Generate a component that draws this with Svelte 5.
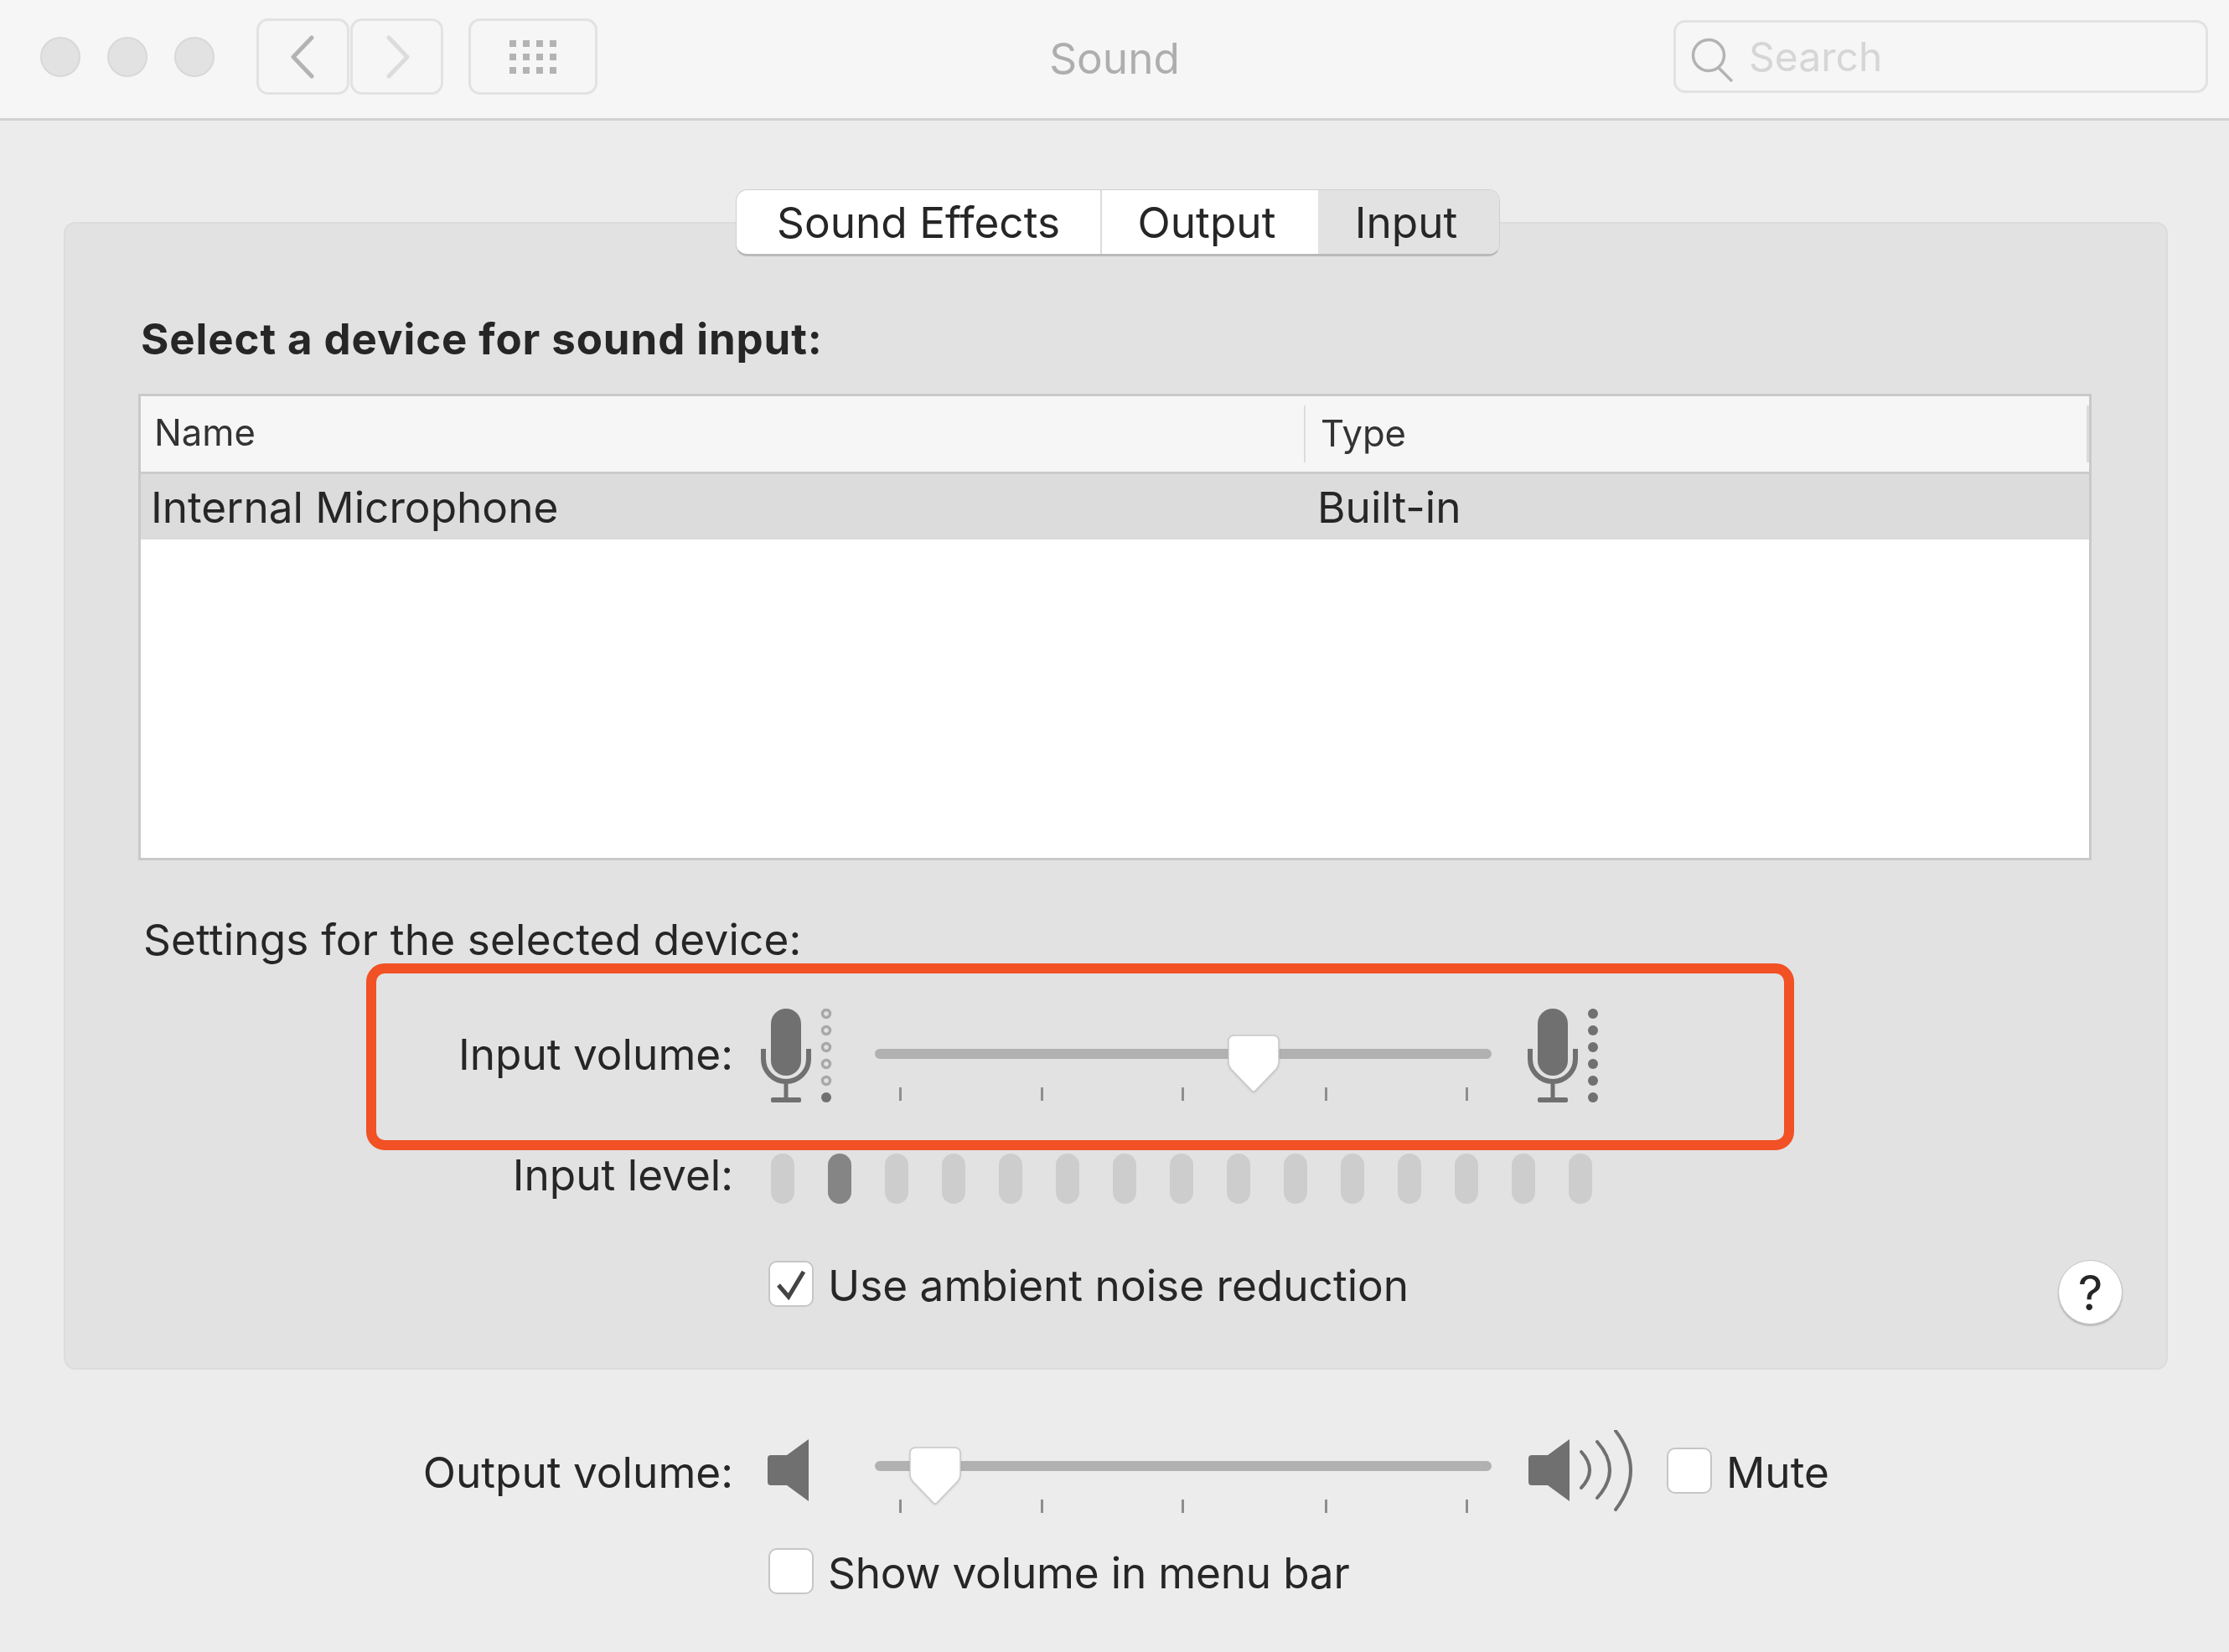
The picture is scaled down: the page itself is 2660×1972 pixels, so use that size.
<script>
  const ticks = [29, 198, 366, 537, 705];
  const levels = Array.from({ length: 15 }, (_, i) => i === 1);
  const dotRows = [6, 26, 46, 66, 86, 106];
  const gridDots = [];
  for (const y of [0, 16, 32]) {
    for (const x of [0, 16, 32, 48]) gridDots.push({ x, y });
  }
</script>

{#snippet mic(loud)}
  <svg class="icon" width="88" height="112" viewBox="0 0 88 112">
    <rect x="12" y="0" width="36" height="80" rx="18" fill="#707070" />
    <path d="M3 48V60A27 27 0 0 0 57 60V48" fill="none" stroke="#707070" stroke-width="6" />
    <path d="M30 87V108" stroke="#707070" stroke-width="5" />
    <rect x="12" y="106" width="36" height="6" rx="2" fill="#707070" />
    {#each dotRows as y, i}
      {#if loud || i === 5}
        <circle cx="78" cy={y} r="6" fill="#707070" />
      {:else}
        <circle cx="78" cy={y} r="4.5" fill="none" stroke="#a8a8a8" stroke-width="3.5" />
      {/if}
    {/each}
  </svg>
{/snippet}

{#snippet slider(knobLeft)}
  <div class="slider">
    <div class="track"></div>
    {#each ticks as t}
      <span class="tick" style="left: {t}px"></span>
    {/each}
    <svg class="knob" style="left: {knobLeft}px" width="62" height="70" viewBox="0 0 62 70">
      <path
        d="M8 1H54Q61 1 61 8V33Q61 37 58 41L33 67Q31 69 29 67L4 41Q1 37 1 33V8Q1 1 8 1Z"
        fill="#fff"
        stroke="#c9c9c9"
        stroke-width="1.5"
      />
    </svg>
  </div>
{/snippet}

{#snippet checkbox(checked)}
  <span class="check">
    {#if checked}
      <svg width="54" height="55" viewBox="0 0 54 55">
        <path d="M12 29L24 43L42 13" fill="none" stroke="#444" stroke-width="5" />
      </svg>
    {/if}
  </span>
{/snippet}

<div class="window">
  <header class="toolbar">
    <div class="left">
      <div class="lights">
        <span></span>
        <span></span>
        <span></span>
      </div>
      <div class="nav">
        <button class="btn">
          <svg width="30" height="54" viewBox="0 0 30 54">
            <path d="M26 4L4 27L26 50" transform="translate(-1 0)" fill="none" stroke="#b3b3b3" stroke-width="5" stroke-linecap="round" stroke-linejoin="round" />
          </svg>
        </button>
        <button class="btn">
          <svg width="30" height="54" viewBox="0 0 30 54">
            <path d="M4 4L26 27L4 50" transform="translate(1 0)" fill="none" stroke="#dcdcdc" stroke-width="5" stroke-linecap="round" stroke-linejoin="round" />
          </svg>
        </button>
      </div>
      <button class="btn grid">
        <svg width="56" height="40" viewBox="0 0 56 40">
          {#each gridDots as d}
            <rect x={d.x} y={d.y} width="8" height="8" fill="#b3b3b3" />
          {/each}
        </svg>
      </button>
    </div>
    <div class="title">Sound</div>
    <div class="search">
      <svg width="56" height="56" viewBox="0 0 56 56">
        <circle cx="21" cy="21" r="18.5" fill="none" stroke="#b3b3b3" stroke-width="3.5" />
        <path d="M33 36L49 52" stroke="#b3b3b3" stroke-width="3.5" />
      </svg>
      <span>Search</span>
    </div>
  </header>

  <main class="content">
    <section class="panel">
      <div class="tabs">
        <div class="tab effects">Sound Effects</div>
        <div class="tab output">Output</div>
        <div class="tab input">Input</div>
      </div>

      <h2>Select a device for sound input:</h2>

      <div class="table">
        <div class="thead">
          <div class="th name">Name</div>
          <div class="th type">Type</div>
          <span class="th-end"></span>
        </div>
        <div class="selected">
          <div class="cell name">Internal Microphone</div>
          <div class="cell">Built-in</div>
        </div>
      </div>

      <p class="settings">Settings for the selected device:</p>

      <div class="row volume">
        <div class="label">Input volume:</div>
        <div class="icon-col">{@render mic(false)}</div>
        {@render slider(421)}
        <div class="mic-right">{@render mic(true)}</div>
      </div>

      <div class="row level">
        <div class="label">Input level:</div>
        <div class="bars">
          {#each levels as on}
            <span class="bar" class:on></span>
          {/each}
        </div>
      </div>

      <div class="row noise">
        <label class="option">
          {@render checkbox(true)}
          <span>Use ambient noise reduction</span>
        </label>
        <button class="help">?</button>
      </div>
    </section>

    <div class="row out">
      <div class="label">Output volume:</div>
      <div class="icon-col">
        <svg class="icon" width="62" height="100" viewBox="0 0 62 100">
          <path d="M12 30H31L57 11V85L31 66H12Q8 66 8 62V34Q8 30 12 30Z" fill="#707070" />
        </svg>
      </div>
      {@render slider(41)}
      <svg class="loud" width="150" height="100" viewBox="0 0 150 100">
        <path d="M5 30H24L50 11V85L24 66H5Q1 66 1 62V34Q1 30 5 30Z" fill="#707070" />
        <g fill="none" stroke="#707070" stroke-width="4" stroke-linecap="round">
          <path d="M64 26Q84 48 64 69" />
          <path d="M83 14Q113 48 83 81" />
          <path d="M105 1Q141 48 105 95" />
        </g>
      </svg>
      <label class="option mute">
        {@render checkbox(false)}
        <span>Mute</span>
      </label>
    </div>

    <label class="option menubar">
      {@render checkbox(false)}
      <span>Show volume in menu bar</span>
    </label>
  </main>

  <!-- annotation drawn over the screenshot -->
  <div class="callout"></div>
</div>

<style>
  :global(body) {
    margin: 0;
  }

  .window {
    position: relative;
    width: 2660px;
    height: 1972px;
    overflow: hidden;
    background: #ececec;
    color: #262626;
    font-family: Inter, "Liberation Sans", sans-serif;
    font-size: 51.3px;
    line-height: 60px;
    filter: blur(0.5px);
  }

  .toolbar {
    display: grid;
    grid-template-columns: 1fr auto 1fr;
    align-items: center;
    box-sizing: border-box;
    height: 144px;
    padding: 0 25px 6px;
    background: #f6f6f6;
    border-bottom: 3px solid #d2d2d2;
  }

  .left {
    display: flex;
    align-items: center;
    padding-left: 23px;
  }

  .lights {
    display: flex;
    gap: 32px;
    margin-right: 50px;
  }

  .lights span {
    box-sizing: border-box;
    width: 48px;
    height: 48px;
    border-radius: 50%;
    background: #e2e2e2;
    border: 2px solid #d8d8d8;
  }

  .nav {
    display: flex;
    gap: 1px;
    margin-right: 30px;
  }

  .btn {
    display: flex;
    align-items: center;
    justify-content: center;
    box-sizing: border-box;
    width: 111px;
    height: 91px;
    padding: 0;
    background: none;
    border: 3px solid #e2e2e2;
    border-radius: 14px;
  }

  .btn.grid {
    width: 154px;
  }

  .title {
    padding-top: 3px;
    color: #aeaeae;
  }

  .search {
    display: flex;
    align-items: center;
    gap: 13px;
    justify-self: end;
    box-sizing: border-box;
    width: 638px;
    height: 87px;
    padding: 11px 0 0 18px;
    border: 3px solid #e2e2e2;
    border-radius: 14px;
    color: #d6d6d6;
    font-size: 48px;
  }

  .search span {
    margin-top: -11px;
  }

  .content {
    display: flex;
    flex-direction: column;
  }

  .panel {
    display: flex;
    flex-direction: column;
    box-sizing: border-box;
    width: 2511px;
    height: 1370px;
    margin: 121px 0 0 76px;
    background: #e2e2e2;
    border: 2px solid #dcdcdc;
    border-radius: 14px;
  }

  .tabs {
    display: flex;
    align-self: flex-start;
    box-sizing: border-box;
    width: 912px;
    height: 80px;
    margin: -41px 0 0 800px;
    overflow: hidden;
    background: #fff;
    border: 1px solid #cfcfcf;
    border-bottom: 3px solid #b9b9b9;
    border-radius: 14px;
  }

  .tab {
    display: flex;
    align-items: center;
    justify-content: center;
    box-sizing: border-box;
    height: 100%;
  }

  .tab.effects {
    width: 436px;
    border-right: 2px solid #dcdcdc;
  }

  .tab.output {
    width: 258px;
    padding-right: 8px;
  }

  .tab.input {
    flex: 1;
    padding-right: 6px;
    background: #e2e2e2;
  }

  h2 {
    margin: 69px 0 0 90px;
    font-size: 51px;
    line-height: 60px;
    font-weight: 700;
    letter-spacing: 0.9px;
  }

  .table {
    box-sizing: border-box;
    width: 2331px;
    height: 557px;
    margin: 35px 0 0 87px;
    background: #fff;
    border: 3px solid #c9c9c9;
  }

  .thead {
    display: flex;
    align-items: center;
    position: relative;
    box-sizing: border-box;
    height: 93px;
    background: #f6f6f6;
    border-bottom: 3px solid #cbcbcb;
    font-size: 43.6px;
    color: #333;
  }

  .th.name {
    box-sizing: border-box;
    width: 1390px;
    height: 68px;
    line-height: 66px;
    padding-left: 16px;
    border-right: 2px solid #dcdcdc;
  }

  .th.type {
    padding-left: 18px;
    line-height: 66px;
  }

  .th-end {
    position: absolute;
    right: 0;
    top: 11px;
    height: 68px;
    border-right: 3px solid #dcdcdc;
  }

  .selected {
    display: flex;
    align-items: center;
    height: 78px;
    background: #dcdcdc;
  }

  .cell.name {
    box-sizing: border-box;
    width: 1404px;
    padding-left: 12px;
  }

  .settings {
    margin: 64px 0 0 93px;
    letter-spacing: 0.15px;
  }

  .row {
    display: flex;
    align-items: flex-start;
  }

  .label {
    box-sizing: border-box;
    width: 797px;
    text-align: right;
    white-space: nowrap;
  }

  .icon-col {
    width: 136px;
    margin-left: 33px;
    flex: none;
  }

  .icon {
    display: block;
  }

  .volume {
    height: 112px;
    margin-top: 53px;
  }

  .volume .label {
    margin-top: 24px;
  }

  .mic-right {
    margin-left: 43px;
  }

  .slider {
    position: relative;
    flex: none;
    width: 736px;
    height: 79px;
    margin-top: 31px;
  }

  .track {
    position: absolute;
    top: 17px;
    left: 0;
    right: 0;
    height: 12px;
    border-radius: 6px;
    background: #b1b1b1;
  }

  .tick {
    position: absolute;
    top: 63px;
    width: 3px;
    height: 16px;
    background: #8e8e8e;
  }

  .knob {
    position: absolute;
    top: 0;
    filter: drop-shadow(0 1px 1px rgba(0, 0, 0, 0.12));
  }

  .level {
    height: 60px;
    margin-top: 61px;
  }

  .level .label {
    margin-top: -5px;
  }

  .bars {
    display: flex;
    gap: 40px;
    margin-left: 45px;
  }

  .bar {
    width: 28px;
    height: 60px;
    border-radius: 14px;
    background: #cdcdcd;
  }

  .bar.on {
    background: #858585;
  }

  .noise {
    height: 77px;
    margin-top: 67px;
    justify-content: space-between;
    padding: 0 52px 0 839px;
  }

  .noise .option {
    margin-top: 1px;
  }

  .option {
    display: flex;
    align-items: center;
    gap: 17px;
    height: 55px;
  }

  .option > span:last-child {
    padding-top: 3px;
  }

  .check {
    display: block;
    box-sizing: border-box;
    width: 54px;
    height: 55px;
    background: #fff;
    border: 2px solid #c6c6c6;
    border-radius: 10px;
  }

  .check svg {
    display: block;
    margin: -2px;
  }

  .help {
    box-sizing: border-box;
    width: 77px;
    height: 77px;
    padding: 0;
    border-radius: 50%;
    background: #fff;
    border: 1px solid #c6c6c6;
    box-shadow: 0 2px 2px rgba(0, 0, 0, 0.2);
    font: inherit;
    font-size: 58px;
    color: #262626;
  }

  .out {
    height: 100px;
    margin-top: 72px;
  }

  .out .label {
    width: 875px;
    margin-top: 20px;
  }

  .out .slider {
    margin-top: 20px;
  }

  .loud {
    flex: none;
    margin-left: 43px;
  }

  .mute {
    margin: 21px 0 0 16px;
  }

  .menubar {
    margin: 41px 0 0 917px;
  }

  .menubar span:last-child {
    letter-spacing: -0.2px;
  }

  .callout {
    position: absolute;
    top: 1150px;
    left: 437px;
    box-sizing: border-box;
    width: 1704px;
    height: 223px;
    border: 12px solid #f15124;
    border-radius: 22px;
  }
</style>
